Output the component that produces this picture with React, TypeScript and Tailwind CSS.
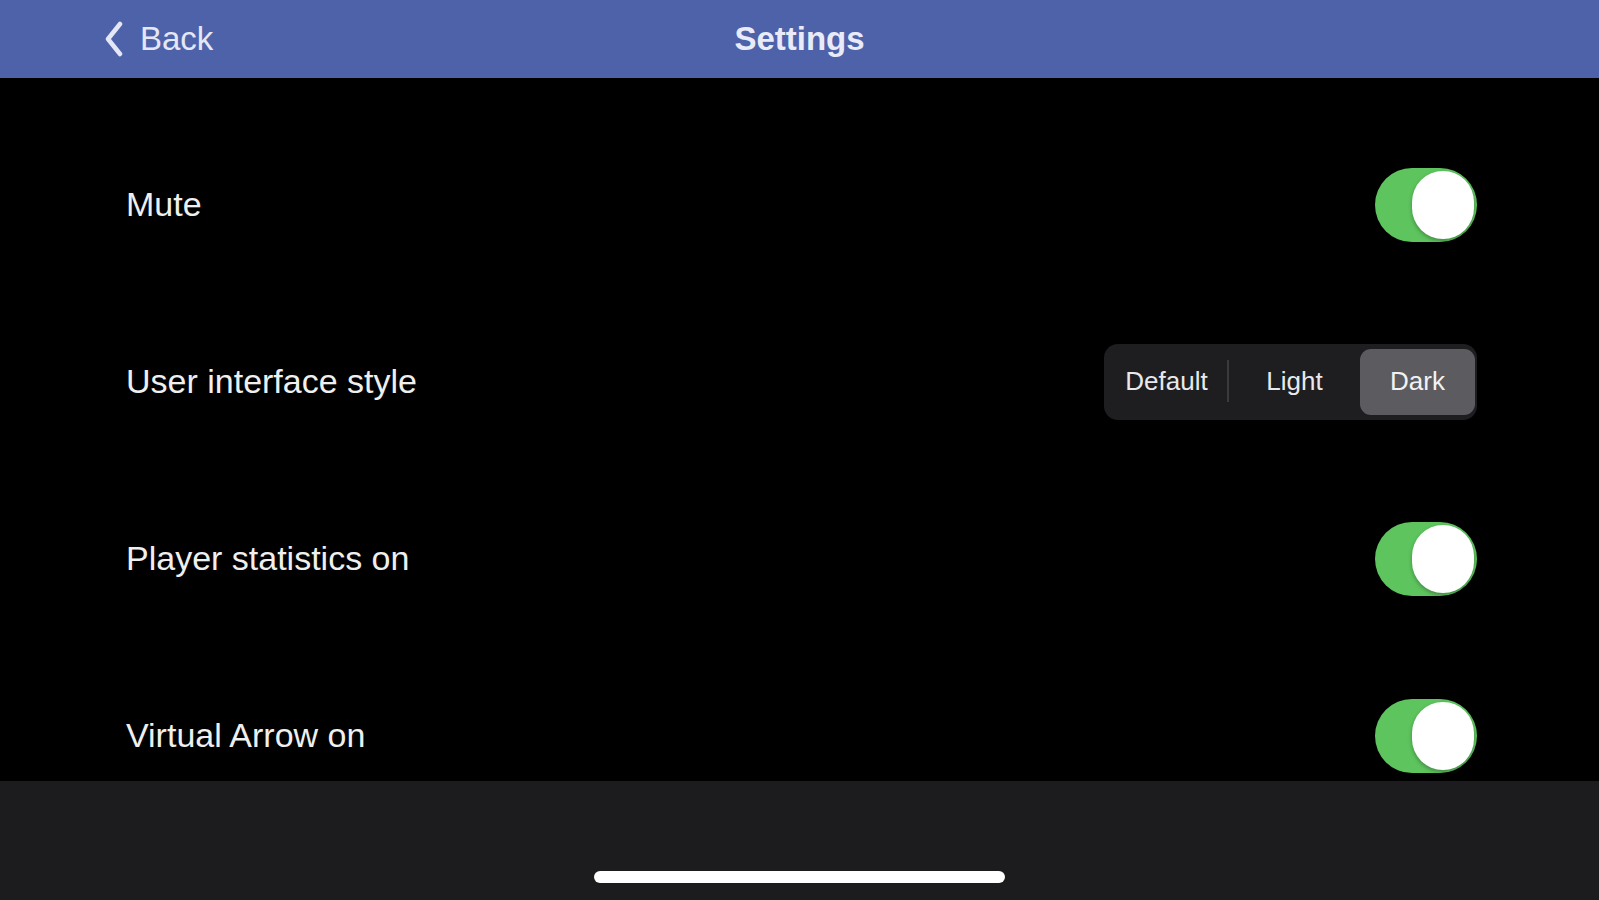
import React from "react";

const font = { fontFamily: '"Liberation Sans", Arial, sans-serif' };

function Toggle() {
  return (
    <div className="relative h-[74px] w-[102px] rounded-full bg-[#5ec55e]">
      <div className="absolute right-[3px] top-[3px] h-[68px] w-[62px] rounded-full bg-white shadow-[0_2px_4px_rgba(0,0,0,0.3)]" />
    </div>
  );
}

function Segmented() {
  return (
    <div className="flex h-[76px] w-[373px] items-stretch rounded-[14px] bg-[#1e1e20] py-[5px] pr-[2px]">
      <div className="relative flex w-[125px] items-center justify-center text-[26px] text-[#e9e9ec]">
        Default
        <div className="absolute right-0 top-[11px] h-[42px] w-[2px] bg-[#3a3a3c]" />
      </div>
      <div className="flex flex-1 items-center justify-center text-[26px] text-[#e9e9ec]">Light</div>
      <div className="flex w-[115px] items-center justify-center rounded-[11px] bg-[#5c5c60] text-[26px] text-[#f2f2f4]">
        Dark
      </div>
    </div>
  );
}

function Row({ label, children }: { label: string; children: React.ReactNode }) {
  return (
    <div className="flex h-[177px] shrink-0 items-center justify-between pl-[126px] pr-[122px]">
      <span className="text-[34px] text-[#efefef]">{label}</span>
      {children}
    </div>
  );
}

export default function App() {
  return (
    <div className="flex h-[900px] w-[1599px] flex-col overflow-hidden bg-black" style={font}>
      <div className="relative flex h-[78px] shrink-0 items-center justify-center bg-[#4e62a9]">
        <div className="absolute left-[103px] top-0 flex h-full items-center gap-[15px] text-[#e4e7f6]">
          <svg width="22" height="36" viewBox="0 0 22 36" fill="none">
            <path d="M17 3 L5 18 L17 33" stroke="#e4e7f6" strokeWidth="4.5" strokeLinecap="round" strokeLinejoin="round" />
          </svg>
          <span className="text-[33px]">Back</span>
        </div>
        <span className="text-[33px] font-bold text-[#e9ebf8]">Settings</span>
      </div>
      <div className="flex h-[703px] shrink-0 flex-col overflow-hidden pt-[38px]">
        <Row label="Mute">
          <Toggle />
        </Row>
        <Row label="User interface style">
          <Segmented />
        </Row>
        <Row label="Player statistics on">
          <Toggle />
        </Row>
        <Row label="Virtual Arrow on">
          <Toggle />
        </Row>
      </div>
      <div className="flex flex-1 flex-col items-center justify-end bg-[#1c1c1e] pb-[17px]">
        <div className="h-[12px] w-[411px] rounded-full bg-white" />
      </div>
    </div>
  );
}
